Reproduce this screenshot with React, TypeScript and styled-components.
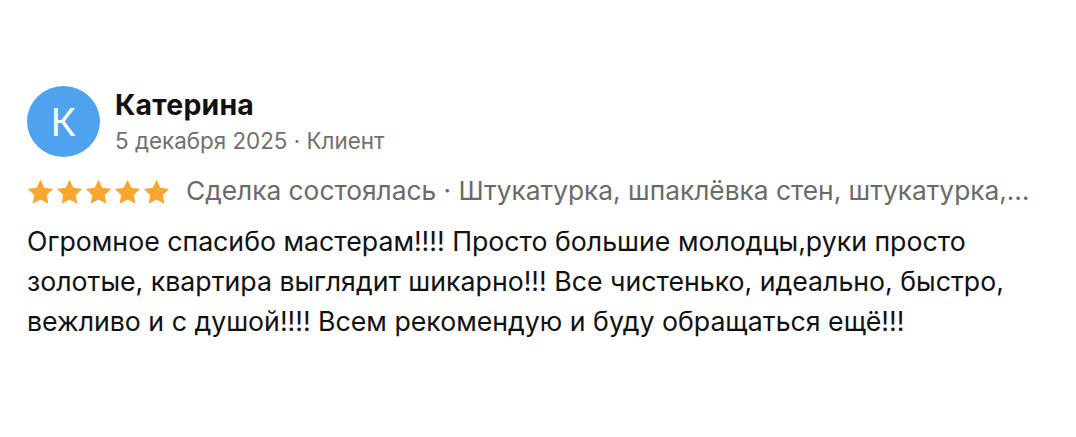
import React from 'react';
import styled, { createGlobalStyle } from 'styled-components';

const GlobalStyle = createGlobalStyle`
  html, body {
    margin: 0;
    padding: 0;
    background: #ffffff;
  }
  body {
    font-family: Inter, 'Noto Sans', Roboto, sans-serif;
    -webkit-font-smoothing: antialiased;
  }
`;

const Card = styled.div`
  width: 1076px;
  height: 437px;
  box-sizing: border-box;
  padding: 86px 0 0 27px;
  background: #fff;
`;

const Header = styled.div`
  display: flex;
  align-items: center;
  gap: 15px;
`;

const Avatar = styled.div`
  width: 73px;
  height: 71px;
  border-radius: 50%;
  background: #4fa3ee;
  color: #fff;
  display: flex;
  align-items: center;
  justify-content: center;
  font-size: 38px;
  font-weight: 400;
`;

const Author = styled.div`
  display: flex;
  flex-direction: column;
  gap: 6px;
`;

const Name = styled.div`
  font-size: 28.4px;
  font-weight: 700;
  color: #111;
  line-height: 32px;
  letter-spacing: 0.2px;
`;

const Meta = styled.div`
  font-size: 22.4px;
  color: #707070;
  line-height: 28px;
`;

const RatingRow = styled.div`
  display: flex;
  align-items: center;
  margin-top: 18px;
  white-space: nowrap;
`;

const Stars = styled.div`
  display: flex;
  gap: 2px;
  margin-right: 16px;
`;

const Deal = styled.div`
  font-size: 26.3px;
  color: #6a6a6a;
  line-height: 32px;
`;

const Body = styled.p`
  margin: 14px 0 0;
  width: 1025px;
  font-size: 26.7px;
  line-height: 40px;
  color: #111;
`;

const Star = () => (
  <svg width="27" height="25" viewBox="0 0 26 24">
    <path
      d="M13 0.8l3.7 7.6 8.5 1.1-6.2 5.8 1.6 8.4L13 19.6l-7.6 4.1 1.6-8.4L0.8 9.5l8.5-1.1z"
      fill="#faa62f"
    />
  </svg>
);

const App = () => {
  return (
    <>
      <GlobalStyle />
      <Card>
        <Header>
          <Avatar>К</Avatar>
          <Author>
            <Name>Катерина</Name>
            <Meta>5 декабря 2025 · Клиент</Meta>
          </Author>
        </Header>
        <RatingRow>
          <Stars>
            {[0, 1, 2, 3, 4].map((i) => (
              <Star key={i} />
            ))}
          </Stars>
          <Deal>
            Сделка состоялась · Штукатурка, шпаклёвка стен, штукатурка,…
          </Deal>
        </RatingRow>
        <Body>
          Огромное спасибо мастерам!!!! Просто большие молодцы,руки просто
          золотые, квартира выглядит шикарно!!! Все чистенько, идеально, быстро,
          вежливо и с душой!!!! Всем рекомендую и буду обращаться ещё!!!
        </Body>
      </Card>
    </>
  );
};

export default App;
